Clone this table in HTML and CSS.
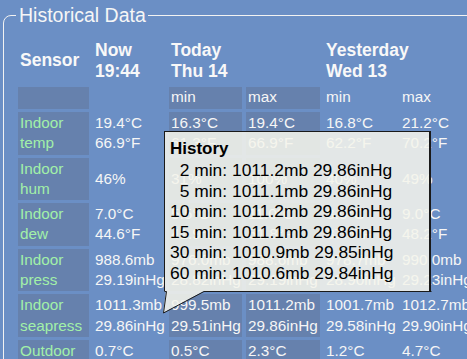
FILE: index.html
```html
<!DOCTYPE html>
<html>
<head>
<meta charset="utf-8">
<title>Historical Data</title>
<link rel="stylesheet" href="styles.css">
</head>
<body>
<fieldset class="panel">
  <legend class="panel-title">Historical Data</legend>
  <table class="hist">
    <colgroup>
      <col class="c-sensor"><col class="c-now"><col class="c-tmin"><col class="c-tmax"><col class="c-ymin"><col class="c-ymax">
    </colgroup>
    <thead>
      <tr class="head">
        <th>Sensor</th>
        <th>Now<br>19:44</th>
        <th colspan="2">Today<br>Thu 14</th>
        <th colspan="2">Yesterday<br>Wed 13</th>
      </tr>
      <tr class="sub">
        <td class="shade"></td><td></td><td class="shade">min</td><td class="shade">max</td><td>min</td><td>max</td>
      </tr>
    </thead>
    <tbody>
      <tr>
        <td class="shade name">Indoor<br>temp</td>
        <td>19.4°C<br>66.9°F</td>
        <td class="shade">16.3°C<br>61.3°F</td>
        <td class="shade">19.4°C<br>66.9°F</td>
        <td>16.8°C<br>62.2°F</td>
        <td>21.2°C<br>70.2°F</td>
      </tr>
      <tr>
        <td class="shade name">Indoor<br>hum</td>
        <td>46%</td>
        <td class="shade">31%</td>
        <td class="shade">100%</td>
        <td>40%</td>
        <td>49%</td>
      </tr>
      <tr>
        <td class="shade name">Indoor<br>dew</td>
        <td>7.0°C<br>44.6°F</td>
        <td class="shade">5.5°C<br>41.9°F</td>
        <td class="shade">11.0°C<br>51.8°F</td>
        <td>3.0°C<br>37.4°F</td>
        <td>9.0°C<br>48.2°F</td>
      </tr>
      <tr>
        <td class="shade name">Indoor<br>press</td>
        <td>988.6mb<br>29.19inHg</td>
        <td class="shade">976.0mb<br>28.82inHg</td>
        <td class="shade">988.6mb<br>29.19inHg</td>
        <td>978.7mb<br>28.90inHg</td>
        <td>990.0mb<br>29.23inHg</td>
      </tr>
      <tr>
        <td class="shade name">Indoor<br>seapress</td>
        <td>1011.3mb<br>29.86inHg</td>
        <td class="shade">999.5mb<br>29.51inHg</td>
        <td class="shade">1011.2mb<br>29.86inHg</td>
        <td>1001.7mb<br>29.58inHg</td>
        <td>1012.7mb<br>29.90inHg</td>
      </tr>
      <tr>
        <td class="shade name">Outdoor<br>temp</td>
        <td>0.7°C<br>33.3°F</td>
        <td class="shade">0.5°C<br>32.9°F</td>
        <td class="shade">2.3°C<br>36.1°F</td>
        <td>1.2°C<br>34.2°F</td>
        <td>4.7°C<br>40.5°F</td>
      </tr>
      <tr>
        <td class="shade name">Outdoor<br>hum</td>
        <td>92%</td>
        <td class="shade">85%</td>
        <td class="shade">95%</td>
        <td>78%</td>
        <td>96%</td>
      </tr>
    </tbody>
  </table>
</fieldset>

<div class="tip">
  <div class="tip-title">History</div>
  <div class="tip-grid">
    <span class="lbl">2 min:</span><span>1011.2mb 29.86inHg</span>
    <span class="lbl">5 min:</span><span>1011.1mb 29.86inHg</span>
    <span class="lbl">10 min:</span><span>1011.2mb 29.86inHg</span>
    <span class="lbl">15 min:</span><span>1011.1mb 29.86inHg</span>
    <span class="lbl">30 min:</span><span>1010.9mb 29.85inHg</span>
    <span class="lbl">60 min:</span><span>1010.6mb 29.84inHg</span>
  </div>
</div>
<svg class="tip-tail" width="276" height="26" viewBox="0 0 276 26">
  <polygon points="6,0 3,22 44,0" fill="rgba(245,245,235,0.87)"/>
  <path d="M4.5,0.5 H6.5 L3.5,22 L44,0.5 H271.5" fill="none" stroke="#1a1a1a" stroke-width="1"/>
</svg>
</body>
</html>
```
FILE: styles.css
```css
html, body {
  margin: 0;
  padding: 0;
  overflow: hidden;
}
body {
  background: #6b8fc5;
  font-family: "Liberation Sans", Arial, sans-serif;
  color: #f6f6f6;
}
.panel {
  margin: 4px 0 0 3px;
  padding: 7px 10px 10px 10px;
  border: 1px solid #f2f2f2;
  border-radius: 8px 0 0 0;
  width: max-content;
}
.panel-title {
  margin-left: 2px;
  padding: 0 2px 0 3px;
  font-size: 19.5px;
  color: #f6f6f6;
}
.hist {
  table-layout: fixed;
  border-collapse: separate;
  border-spacing: 4px 3px;
  width: 466px;
}
.c-sensor { width: 71px; }
.c-now { width: 72px; }
.c-tmin { width: 73px; }
.c-tmax { width: 74px; }
.c-ymin { width: 72px; }
.c-ymax { width: 76px; }
.hist th {
  font-size: 17.5px;
  font-weight: bold;
  line-height: 20.5px;
  text-align: left;
  padding: 3px 2px 3px 2px;
  vertical-align: middle;
  color: #f8f8f8;
  white-space: nowrap;
}
.hist td {
  font-size: 15.3px;
  line-height: 20.3px;
  padding: 1px 2px;
  vertical-align: middle;
  white-space: nowrap;
  overflow: visible;
  color: #f6f6f6;
}
.hist .sub td {
  line-height: 20px;
  padding: 0 2px 2px 2px;
}
.hist .shade {
  background: #6681ad;
}
.hist .name {
  color: #a2f0a8;
}
.tip {
  position: absolute;
  left: 164px;
  top: 131px;
  width: 267px;
  height: 160px;
  box-sizing: border-box;
  border: 1px solid #1a1a1a;
  border-right-width: 2px;
  border-bottom: none;
  background: rgba(245, 245, 235, 0.87);
  color: #000;
  font-family: "Liberation Sans", Arial, sans-serif;
  font-size: 17.4px;
  line-height: 20.6px;
  padding: 7px 5px;
}
.tip-title {
  font-weight: bold;
  font-size: 17px;
  margin-bottom: 0.4px;
}
.tip-grid {
  display: grid;
  grid-template-columns: max-content max-content;
  column-gap: 5px;
}
.tip-grid .lbl {
  text-align: right;
}
.tip-tail {
  position: absolute;
  left: 160px;
  top: 291px;
  overflow: visible;
}
```
